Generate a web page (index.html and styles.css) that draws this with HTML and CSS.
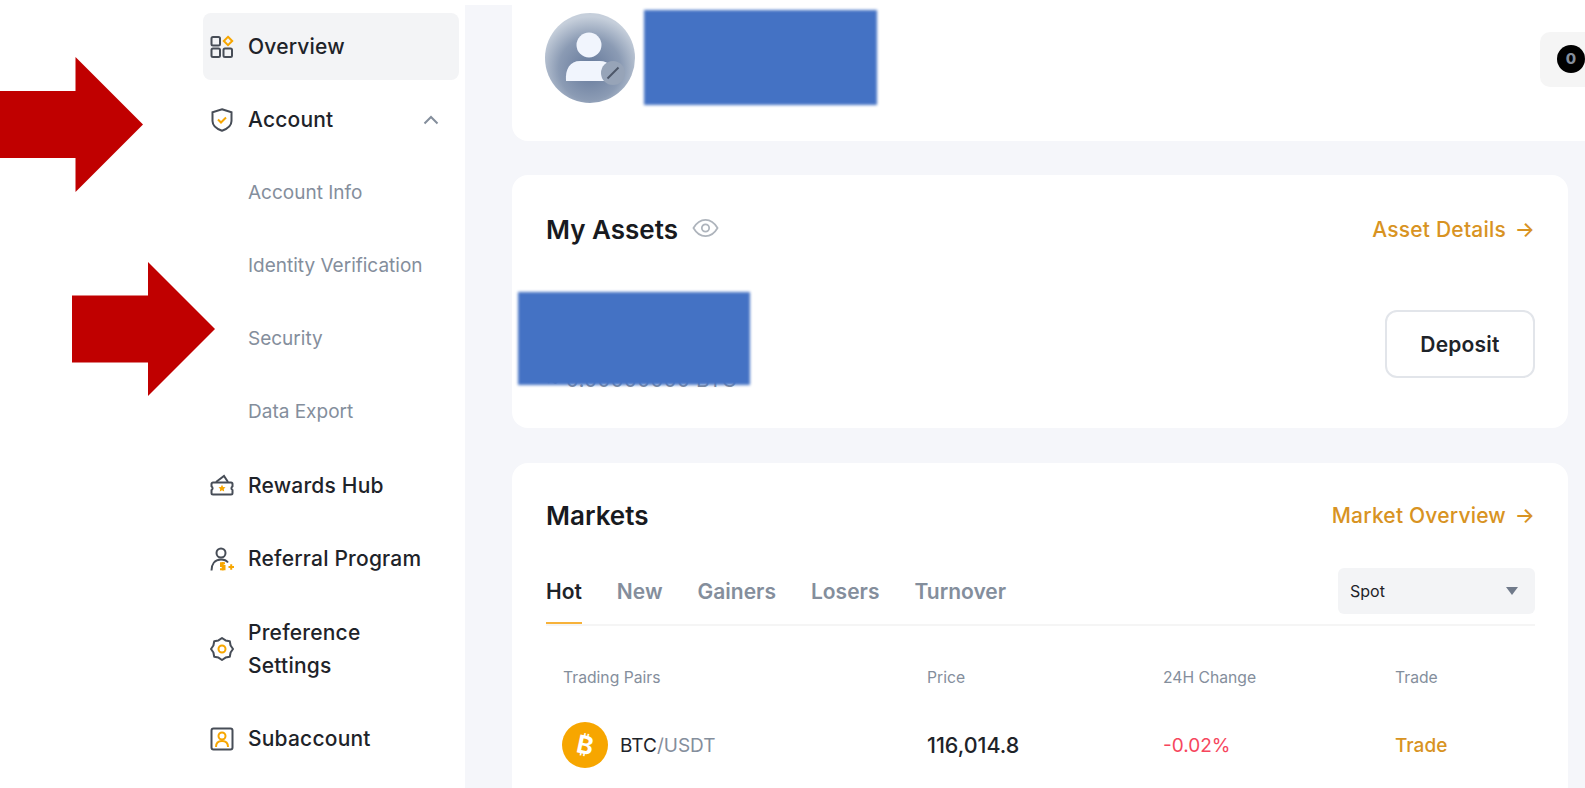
FILE: index.html
```html
<!DOCTYPE html>
<html lang="en">
<head>
    <meta charset="UTF-8">
    <meta name="viewport" content="width=device-width, initial-scale=1.0">
    <title>Dashboard</title>
    <link rel="stylesheet" href="styles.css">
</head>
<body>
    <div class="page">
        <nav class="sidebar">
            <a class="nav-item active">
                <svg class="nav-icon" viewBox="0 0 24 24" fill="none" stroke-width="2">
                    <rect x="1.500" y="2" width="8.500" height="8.500" rx="1.500" stroke="#474d57"/>
                    <rect x="1.500" y="13.500" width="8.500" height="8.500" rx="1.500" stroke="#474d57"/>
                    <rect x="13.500" y="13.500" width="8.500" height="8.500" rx="1.500" stroke="#474d57"/>
                    <path d="M18 1.800l4.200 4.200-4.200 4.200-4.200-4.200z" stroke="#f7a600"/>
                </svg>
                <span>Overview</span>
            </a>
            <a class="nav-item">
                <svg class="nav-icon" viewBox="0 0 24 24" fill="none" stroke-width="2">
                    <path d="M12 1.200l9.500 3v8.800c0 4.500-4 7.800-9.500 9.800-5.500-2-9.500-5.300-9.500-9.800V4.200z" stroke="#474d57"/>
                    <path d="M8 11.500l3 3 5-5" stroke="#f7a600"/>
                </svg>
                <span>Account</span>
                <svg class="nav-caret" viewBox="0 0 16 10" fill="none" stroke="#848e9c" stroke-width="2"><path d="M1.500 8.500L8 2l6.500 6.500"/></svg>
            </a>
            <a class="nav-item sub">Account Info</a>
            <a class="nav-item sub">Identity Verification</a>
            <a class="nav-item sub">Security</a>
            <a class="nav-item sub">Data Export</a>
            <a class="nav-item after-sub">
                <svg class="nav-icon" viewBox="0 0 24 24" fill="none" stroke-width="2">
                    <path d="M3 8.500h18a1.500 1.500 0 0 1 1.500 1.500v2.300a2.300 2.300 0 0 0 0 3.900V19a1.500 1.500 0 0 1-1.500 1.500H3A1.500 1.500 0 0 1 1.500 19v-2.800a2.300 2.300 0 0 0 0-3.900V10A1.500 1.500 0 0 1 3 8.500z" stroke="#474d57"/>
                    <path d="M6 8l8-6 4 6" stroke="#474d57"/>
                    <path d="M12 10.800l1.100 2.200 2.400.3-1.700 1.700.4 2.400-2.200-1.100-2.200 1.100.4-2.400-1.700-1.700 2.400-.3z" fill="#f7a600"/>
                </svg>
                <span>Rewards Hub</span>
            </a>
            <a class="nav-item">
                <svg class="nav-icon" viewBox="0 0 24 24" fill="none" stroke-width="2">
                    <circle cx="11" cy="6" r="4.500" stroke="#474d57"/>
                    <path d="M1.500 23.500c0-6 3-11 9.500-11 3 0 5.500 1 7 3" stroke="#474d57"/>
                    <path d="M15 16.300h-4v2.800h3.500v3.200H10M12.700 15v8.500M18.500 20h5.500M21.200 17.300v5.400" stroke="#f7a600"/>
                </svg>
                <span>Referral Program</span>
            </a>
            <a class="nav-item tall">
                <svg class="nav-icon" viewBox="0 0 24 24" fill="none" stroke-width="2" stroke-linejoin="round">
                    <path d="M12 1l3.560 2.410 4.220.81.810 4.220L23 12l-2.410 3.560-.81 4.220-4.220.81L12 23l-3.560-2.410-4.220-.81-.810-4.220L1 12l2.410-3.560.810-4.220 4.220-.810z" stroke="#474d57"/>
                    <circle cx="12" cy="12" r="3.500" stroke="#f7a600"/>
                </svg>
                <span class="wrap-label">Preference Settings</span>
            </a>
            <a class="nav-item">
                <svg class="nav-icon" viewBox="0 0 24 24" fill="none" stroke-width="2">
                    <rect x="1.500" y="1.500" width="21" height="21" rx="2" stroke="#474d57"/>
                    <circle cx="12" cy="9" r="3.500" stroke="#f7a600"/>
                    <path d="M6 20c0-4 2.500-6 6-6s6 2 6 6" stroke="#f7a600"/>
                </svg>
                <span>Subaccount</span>
            </a>
        </nav>

        <main class="main">
            <section class="card profile-card">
                <div class="avatar">
                    <svg viewBox="0 0 90 90" width="90" height="90">
                        <defs>
                            <radialGradient id="avatarBg" cx="50%" cy="62%" r="58%">
                                <stop offset="0" stop-color="#64789a"/>
                                <stop offset="0.6" stop-color="#8b9bb4"/>
                                <stop offset="1" stop-color="#c6cfdb"/>
                            </radialGradient>
                        </defs>
                        <circle cx="45" cy="45" r="45" fill="url(#avatarBg)"/>
                        <circle cx="44" cy="32" r="12.500" fill="#f1f5fd"/>
                        <path d="M21 68c-1-12 4-20 14-20h20c9 0 14 6 14 20z" fill="#f1f5fd"/>
                        <circle cx="68" cy="60" r="12" fill="#97a4b8"/>
                        <path d="M62.500 65.500l11-11" stroke="#4d5769" stroke-width="2"/>
                    </svg>
                </div>
                <div class="balance-badge"><span class="badge-dot">0</span></div>
                <div class="redact redact-name"></div>
            </section>

            <section class="card assets-card">
                <div class="card-head">
                    <div class="card-title-wrap">
                        <h2 class="card-title">My Assets</h2>
                        <svg class="eye" viewBox="0 0 28 20" fill="none" stroke="#aeb4bc" stroke-width="1.800">
                            <path d="M1.500 10C5 4 9 1.500 14 1.500S23 4 26.500 10C23 16 19 18.500 14 18.500S5 16 1.500 10z"/>
                            <circle cx="14" cy="10" r="3.800"/>
                        </svg>
                    </div>
                    <a class="link">Asset Details <span class="arrow">→</span></a>
                </div>
                <div class="assets-body">
                    <div class="btc-value">≈ 0.00000000 BTC</div>
                    <button class="deposit">Deposit</button>
                </div>
                <div class="redact redact-balance"></div>
            </section>

            <section class="card markets-card">
                <div class="card-head">
                    <h2 class="card-title">Markets</h2>
                    <a class="link">Market Overview <span class="arrow">→</span></a>
                </div>
                <div class="tabs">
                    <a class="tab active">Hot</a>
                    <a class="tab">New</a>
                    <a class="tab">Gainers</a>
                    <a class="tab">Losers</a>
                    <a class="tab">Turnover</a>
                    <div class="select">
                        <span>Spot</span>
                        <i class="select-caret"></i>
                    </div>
                </div>
                <div class="market-row market-head">
                    <div>Trading Pairs</div>
                    <div>Price</div>
                    <div>24H Change</div>
                    <div>Trade</div>
                </div>
                <div class="market-row">
                    <div class="pair">
                        <span class="coin"><b>₿</b></span>
                        <span>BTC<em>/USDT</em></span>
                    </div>
                    <div class="price">116,014.8</div>
                    <div class="down">-0.02%</div>
                    <div class="trade">Trade</div>
                </div>
            </section>
        </main>
    </div>

    <!-- annotation arrows drawn on top of the screenshot -->
    <svg class="arrow-mark arrow-one" viewBox="0 0 143 135"><path d="M0 34h75.500V0L143 67.500 75.500 135v-34H0z"/></svg>
    <svg class="arrow-mark arrow-two" viewBox="0 0 143 134"><path d="M0 33.500h76V0l67 67-67 67v-33.500H0z"/></svg>
</body>
</html>
```

FILE: styles.css
```css
* {
    margin: 0;
    padding: 0;
    box-sizing: border-box;
}

html, body {
    height: 100%;
    overflow: hidden;
}

body {
    background: #fff;
    font-family: Inter, "Liberation Sans", sans-serif;
    color: #1e2329;
}

.page {
    display: flex;
    height: 788px;
}

/* sidebar */
.sidebar {
    flex: 0 0 465px;
    padding: 13px 6px 0 203px;
    display: flex;
    flex-direction: column;
    gap: 6px;
}

.nav-item {
    display: flex;
    align-items: center;
    flex: 0 0 67px;
    padding: 0 20px 0 7px;
    border-radius: 8px;
    font-size: 21px;
    font-weight: 500;
    letter-spacing: .2px;
    color: #1e2329;
}

.nav-item.active {
    background: #f3f4f6;
}

.nav-item.sub {
    padding: 0 0 1px 45px;
    font-size: 19px;
    font-weight: 400;
    letter-spacing: 0;
    color: #848e9c;
}

.nav-item.after-sub {
    margin-top: 1px;
}

.nav-item.tall {
    flex-basis: 101px;
    line-height: 33px;
}

.wrap-label {
    max-width: 130px;
}

.nav-icon {
    flex: 0 0 24px;
    width: 24px;
    height: 24px;
    margin-right: 14px;
}

.nav-caret {
    width: 16px;
    height: 10px;
    margin-left: auto;
}

/* main column */
.main {
    flex: 1;
    min-width: 0;
    margin-top: 5px;
    padding: 0 17px 0 47px;
    background: #f5f6fa;
    display: flex;
    flex-direction: column;
    gap: 35px;
}

.card {
    position: relative;
    background: #fff;
    border-radius: 16px;
    padding: 0 33px 0 34px;
}

.profile-card {
    flex: 0 0 141px;
    margin: -5px -17px -1px 0;
    border-radius: 0 0 0 16px;
    display: flex;
    align-items: flex-start;
    justify-content: space-between;
    padding-right: 0;
}

.avatar {
    width: 90px;
    height: 90px;
    margin-top: 13px;
    margin-left: -1px;
}

.balance-badge {
    width: 45px;
    height: 55px;
    margin-top: 32px;
    padding: 13px 0 0 17px;
    background: #f5f5f5;
    border-radius: 10px 0 0 10px;
}

.badge-dot {
    display: block;
    width: 28px;
    height: 28px;
    border-radius: 50%;
    background: #000;
    color: #848e9c;
    font-size: 15px;
    font-weight: 800;
    line-height: 28px;
    text-align: center;
}

.assets-card {
    flex: 0 0 253px;
}

.markets-card {
    flex: 1;
    border-radius: 16px 16px 0 0;
}

.card-head {
    display: flex;
    align-items: center;
    justify-content: space-between;
    height: 36px;
}

.assets-card .card-head {
    padding-top: 36px;
    height: 72px;
}

.markets-card .card-head {
    margin-top: 34px;
}

.card-title-wrap {
    display: flex;
    align-items: center;
    gap: 14px;
}

.card-title {
    font-size: 26px;
    font-weight: 600;
    color: #181a20;
}

.eye {
    width: 27px;
    height: 20px;
    margin-top: -3px;
}

.link {
    font-size: 21px;
    font-weight: 500;
    letter-spacing: .2px;
    color: #d89322;
}

.arrow {
    margin-left: 3px;
}

.assets-body {
    display: flex;
    justify-content: space-between;
    margin-top: 63px;
}

.btc-value {
    margin-top: 57px;
    font-size: 21px;
    color: #848e9c;
    white-space: nowrap;
}

.deposit {
    width: 150px;
    height: 68px;
    background: #fff;
    border: 2px solid #e2e5ea;
    border-radius: 12px;
    font: 600 21px Inter, "Liberation Sans", sans-serif;
    letter-spacing: .2px;
    color: #1e2329;
}

/* over the text, as in the screenshot */
.redact {
    position: absolute;
    background: #4472c4;
    filter: blur(1.500px);
}

.redact-name {
    left: 132px;
    top: 10px;
    width: 233px;
    height: 95px;
}

.redact-balance {
    left: 6px;
    top: 117px;
    width: 232px;
    height: 93px;
}

/* markets */
.tabs {
    display: flex;
    align-items: flex-start;
    gap: 35px;
    margin-top: 35px;
    height: 58px;
    border-bottom: 2px solid #f5f5f5;
}

.tab {
    height: 56px;
    padding-top: 11px;
    font-size: 21px;
    font-weight: 600;
    color: #848e9c;
}

.tab.active {
    color: #1e2329;
    border-bottom: 2px solid #f7b23a;
}

.select {
    margin-left: auto;
    width: 197px;
    height: 46px;
    padding: 0 17px 0 12px;
    display: flex;
    align-items: center;
    justify-content: space-between;
    background: #f3f4f6;
    border-radius: 6px;
    font-size: 16px;
    color: #1e2329;
}

.select-caret {
    width: 0;
    height: 0;
    border-left: 6px solid transparent;
    border-right: 6px solid transparent;
    border-top: 8px solid #707a8a;
}

.market-row {
    display: grid;
    grid-template-columns: 365px 236px 232px 1fr;
    align-items: center;
    padding-left: 16px;
    height: 62px;
    font-size: 19px;
}

.market-head {
    height: 58px;
    margin-top: 42px;
    padding: 0 0 10px 17px;
    grid-template-columns: 364px 236px 232px 1fr;
    font-size: 15.700px;
    color: #848e9c;
    align-items: start;
}

.market-head + .market-row {
    margin-top: -15px;
    height: 68px;
}

.pair {
    display: flex;
    align-items: center;
    gap: 12px;
}

.pair em {
    font-style: normal;
    color: #848e9c;
}

.coin {
    flex: 0 0 46px;
    height: 46px;
    border-radius: 50%;
    background: #f7a600;
    color: #fff;
    font-size: 25px;
    line-height: 46px;
    text-align: center;
}

.coin b {
    display: inline-block;
    transform: rotate(12deg);
}

.price {
    font-size: 21.500px;
    font-weight: 500;
}

.down {
    color: #f6465d;
}

.trade {
    font-weight: 500;
    color: #d89322;
}

/* red annotation arrows */
.arrow-mark {
    position: absolute;
    fill: #c00000;
}

.arrow-one {
    left: 0;
    top: 57px;
    width: 143px;
    height: 135px;
}

.arrow-two {
    left: 72px;
    top: 262px;
    width: 143px;
    height: 134px;
}
```
